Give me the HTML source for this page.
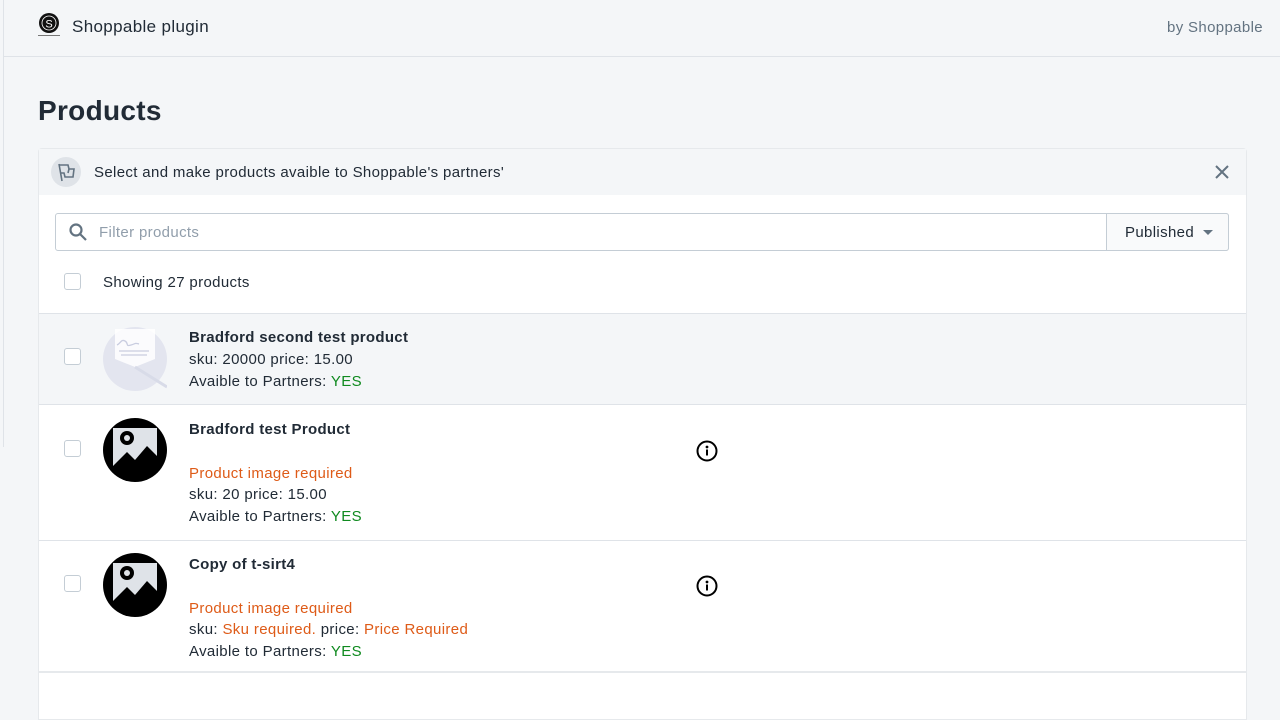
<!DOCTYPE html>
<html><head><style>
*{margin:0;padding:0;box-sizing:border-box}
body{width:1280px;height:720px;overflow:hidden;background:#f4f6f8;font-family:"Liberation Sans",sans-serif;color:#212b36;position:relative;font-size:15px}
.a{position:absolute}
.cb{position:absolute;width:17px;height:17px;border:1px solid #c4cdd5;border-radius:3px;background:#fff}
.t{position:absolute;font-size:15px;line-height:21.5px;white-space:nowrap;letter-spacing:0.35px}
.b{font-weight:bold;letter-spacing:0.3px}
.g{color:#0f8a1f}.o{color:#de5b18}
</style></head><body>
<div class="a" style="left:3px;top:0;width:1px;height:447px;background:#dfe3e8"></div>
<div class="a" style="left:4px;top:56px;width:1276px;height:1px;background:#dfe3e8"></div>
<svg class="a" style="left:37px;top:12px" width="24" height="26" viewBox="0 0 24 26"><circle cx="12" cy="11" r="10" fill="#111"/><circle cx="12" cy="11" r="7" fill="none" stroke="#fff" stroke-width="0.8"/><text x="12" y="15.5" text-anchor="middle" fill="#fff" font-size="11" font-family="Liberation Sans">S</text><rect x="1" y="23" width="22" height="1" fill="#777"/></svg>
<div class="t" style="left:72px;top:16px;font-size:17px">Shoppable plugin</div>
<div class="t" style="left:1167px;top:17px;color:#637381">by Shoppable</div>
<div class="t b" style="left:38px;top:95px;font-size:28px;line-height:32px">Products</div>
<div class="a" style="left:38px;top:148px;width:1209px;height:572px;background:#fff;border:1px solid #e6e9ec;border-radius:4px 4px 0 0"></div>
<div class="a" style="left:39px;top:149px;width:1207px;height:46px;background:#f4f6f8"></div>
<div class="a" style="left:51px;top:157px;width:30px;height:30px;border-radius:50%;background:#dfe3e8"></div>
<svg class="a" style="left:55px;top:161px" width="22" height="22" viewBox="0 0 22 22" fill="none" stroke="#637381" stroke-width="1.6"><path d="M4 3l3 17"/><path d="M4 4h9l1 4h5l-1 8h-8l-1-4H6"/><path d="M14 8l-1 4"/></svg>
<div class="t" style="left:94px;top:162px">Select and make products avaible to Shoppable's partners'</div>
<svg class="a" style="left:1215px;top:165px" width="14" height="14" viewBox="0 0 14 14" stroke="#637381" stroke-width="2"><path d="M1 1l12 12M13 1L1 13"/></svg>
<div class="a" style="left:55px;top:213px;width:1174px;height:38px;border:1px solid #c4cdd5;border-radius:3px"></div>
<div class="a" style="left:1106px;top:213px;width:123px;height:38px;border:1px solid #c4cdd5;border-radius:0 3px 3px 0;background:#f9fafb"></div>
<svg class="a" style="left:68px;top:222px" width="20" height="20" viewBox="0 0 20 20" fill="none" stroke="#637381" stroke-width="2.2"><circle cx="8" cy="8" r="5.5"/><path d="M12 12l6 6"/></svg>
<div class="t" style="left:99px;top:222px;color:#919eab">Filter products</div>
<div class="t" style="left:1125px;top:222px">Published</div>
<div class="a" style="left:1203px;top:230px;border:5px solid transparent;border-top-color:#637381;border-bottom:0"></div>
<div class="cb" style="left:64px;top:273px"></div>
<div class="t" style="left:103px;top:272px">Showing 27 products</div>
<div class="a" style="left:39px;top:313px;width:1207px;height:92px;background:#f4f6f8;border-top:1px solid #dfe3e8;border-bottom:1px solid #dfe3e8"></div>
<div class="cb" style="left:64px;top:348px"></div>
<svg class="a" style="left:103px;top:327px" width="64" height="64" viewBox="0 0 64 64"><circle cx="32" cy="32" r="32" fill="#e3e5ef"/><path d="M12 2h40v30l-20 8-20-8z" fill="#fff" opacity=".85"/><path d="M14 18c4-2 4-6 8-4s0 6 6 4 4-2 8-1M16 24h30M18 28h26" stroke="#c9cde0" fill="none" stroke-width="1.3"/><path d="M32 40l32 20" stroke="#d8dbe8" stroke-width="3"/></svg>
<div class="t b" style="left:189px;top:327px">Bradford second test product</div>
<div class="t" style="left:189px;top:349px">sku: 20000 price: 15.00</div>
<div class="t" style="left:189px;top:371px">Avaible to Partners: <span class="g">YES</span></div>
<div class="cb" style="left:64px;top:440px"></div>
<svg class="a" style="left:103px;top:418px" width="64" height="64" viewBox="0 0 64 64"><circle cx="32" cy="32" r="32" fill="#000"/><path d="M10 10h44v28l-10-10-12 14-8-8-14 14z" fill="#dfe3e8"/><circle cx="24" cy="20" r="7" fill="#000"/><circle cx="24" cy="20" r="3" fill="#dfe3e8"/></svg>
<div class="t b" style="left:189px;top:419px">Bradford test Product</div>
<div class="t o" style="left:189px;top:463px">Product image required</div>
<div class="t" style="left:189px;top:484px">sku: 20 price: 15.00</div>
<div class="t" style="left:189px;top:506px">Avaible to Partners: <span class="g">YES</span></div>
<svg class="a" style="left:696px;top:440px" width="22" height="22" viewBox="0 0 22 22"><circle cx="11" cy="11" r="9.5" fill="none" stroke="#000" stroke-width="2"/><circle cx="11" cy="7" r="1.4"/><rect x="10" y="9.5" width="2" height="6"/></svg>
<div class="a" style="left:39px;top:540px;width:1207px;height:1px;background:#dfe3e8"></div>
<div class="cb" style="left:64px;top:575px"></div>
<svg class="a" style="left:103px;top:553px" width="64" height="64" viewBox="0 0 64 64"><circle cx="32" cy="32" r="32" fill="#000"/><path d="M10 10h44v28l-10-10-12 14-8-8-14 14z" fill="#dfe3e8"/><circle cx="24" cy="20" r="7" fill="#000"/><circle cx="24" cy="20" r="3" fill="#dfe3e8"/></svg>
<div class="t b" style="left:189px;top:554px">Copy of t-sirt4</div>
<div class="t o" style="left:189px;top:598px">Product image required</div>
<div class="t" style="left:189px;top:619px">sku: <span class="o">Sku required.</span> price: <span class="o">Price Required</span></div>
<div class="t" style="left:189px;top:641px">Avaible to Partners: <span class="g">YES</span></div>
<svg class="a" style="left:696px;top:575px" width="22" height="22" viewBox="0 0 22 22"><circle cx="11" cy="11" r="9.5" fill="none" stroke="#000" stroke-width="2"/><circle cx="11" cy="7" r="1.4"/><rect x="10" y="9.5" width="2" height="6"/></svg>
<div class="a" style="left:39px;top:671px;width:1207px;height:2px;background:#e6e9ec"></div>
<div class="a" style="left:1247px;top:688px;width:33px;height:32px;background:#f4f6f8"></div>
</body></html>
